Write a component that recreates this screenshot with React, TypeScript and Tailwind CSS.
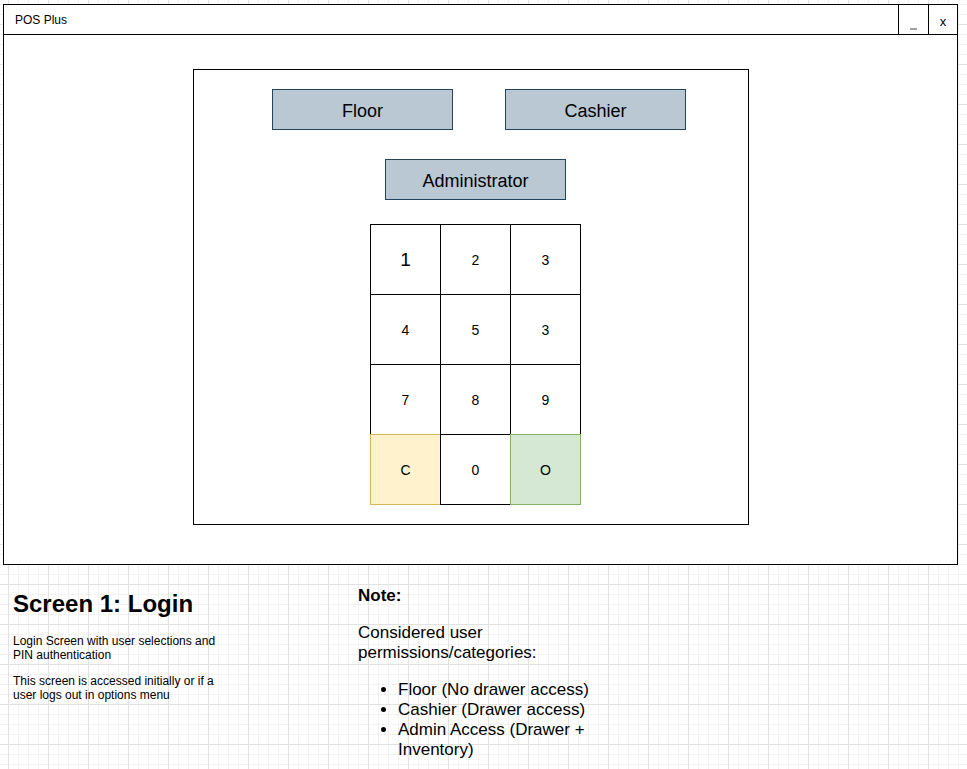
import React from 'react'

const keys = ['1', '2', '3', '4', '5', '3', '7', '8', '9', 'C', '0', 'O']

function RoleButton({ label }: { label: string }) {
  return (
    <button className="w-[181px] h-[41px] pt-[3px] bg-[#bac8d3] border border-[#23445d] text-[18px] text-black flex items-center justify-center">
      {label}
    </button>
  )
}

function Keypad() {
  return (
    <div className="grid grid-cols-[repeat(3,70px)] grid-rows-[repeat(4,70px)] w-[211px] h-[281px]">
      {keys.map((k, i) => {
        // last row: clear / ok get their own colours
        let cls = 'bg-white border-black'
        if (k === 'C') cls = 'bg-[#fff2cc] border-[#d6b656]'
        if (k === 'O') cls = 'bg-[#d5e8d4] border-[#82b366]'
        return (
          <div
            key={i}
            className={`w-[71px] h-[71px] pt-[2px] border flex items-center justify-center text-black ${cls} ${
              i === 0 ? 'text-[19px]' : 'text-[14px]'
            }`}
          >
            {k}
          </div>
        )
      })}
    </div>
  )
}

export default function App() {
  return (
    <div className="w-[967px] h-[769px] overflow-hidden pt-[4px] pl-[3px] font-['Liberation_Sans',Arial,sans-serif] text-black bg-white bg-[linear-gradient(to_right,#e2e2e2_1px,transparent_1px),linear-gradient(to_bottom,#e2e2e2_1px,transparent_1px),linear-gradient(to_right,#f2f2f2_1px,transparent_1px),linear-gradient(to_bottom,#f2f2f2_1px,transparent_1px)] bg-[length:40px_40px,40px_40px,10px_10px,10px_10px] bg-[position:8px_24px,8px_24px,8px_4px,8px_4px]">
      {/* Window */}
      <div className="w-[955px] h-[561px] border border-black bg-white flex flex-col">
        <div className="h-[30px] border-b border-black flex shrink-0">
          <div className="flex-1 pl-[11px] flex items-center text-[12px]">POS Plus</div>
          <div className="w-[30px] border-l border-black flex items-end justify-center pb-[4px]">
            <span className="block w-[7px] h-[2px] bg-[#a0a0a0]"></span>
          </div>
          <div className="w-[29px] border-l border-black flex items-center justify-center pt-[4px] text-[13px]">x</div>
        </div>

        <div className="pl-[189px] pt-[34px]">
          <div className="w-[556px] h-[456px] border border-black">
            <div className="flex gap-[52px] ml-[78px] mt-[19px]">
              <RoleButton label="Floor" />
              <RoleButton label="Cashier" />
            </div>
            <div className="ml-[191px] mt-[29px]">
              <RoleButton label="Administrator" />
            </div>
            <div className="ml-[176px] mt-[24px]">
              <Keypad />
            </div>
          </div>
        </div>
      </div>

      {/* Notes under the window */}
      <div className="flex">
        <div className="w-[355px] pl-[10px]">
          <h1 className="mt-[25px] text-[24px] leading-[28px] font-bold">Screen 1: Login</h1>
          <p className="mt-[16px] text-[12px] leading-[14px]">
            Login Screen with user selections and
            <br />
            PIN authentication
          </p>
          <p className="mt-[12px] text-[12px] leading-[14px]">
            This screen is accessed initially or if a
            <br />
            user logs out in options menu
          </p>
        </div>
        <div className="text-[17px] leading-[20px]">
          <div className="mt-[21px] font-bold">Note:</div>
          <p className="mt-[17px]">
            Considered user
            <br />
            permissions/categories:
          </p>
          <ul className="mt-[17px] list-disc pl-[40px]">
            <li>Floor (No drawer access)</li>
            <li>Cashier (Drawer access)</li>
            <li>
              Admin Access (Drawer +
              <br />
              Inventory)
            </li>
          </ul>
        </div>
      </div>
    </div>
  )
}
